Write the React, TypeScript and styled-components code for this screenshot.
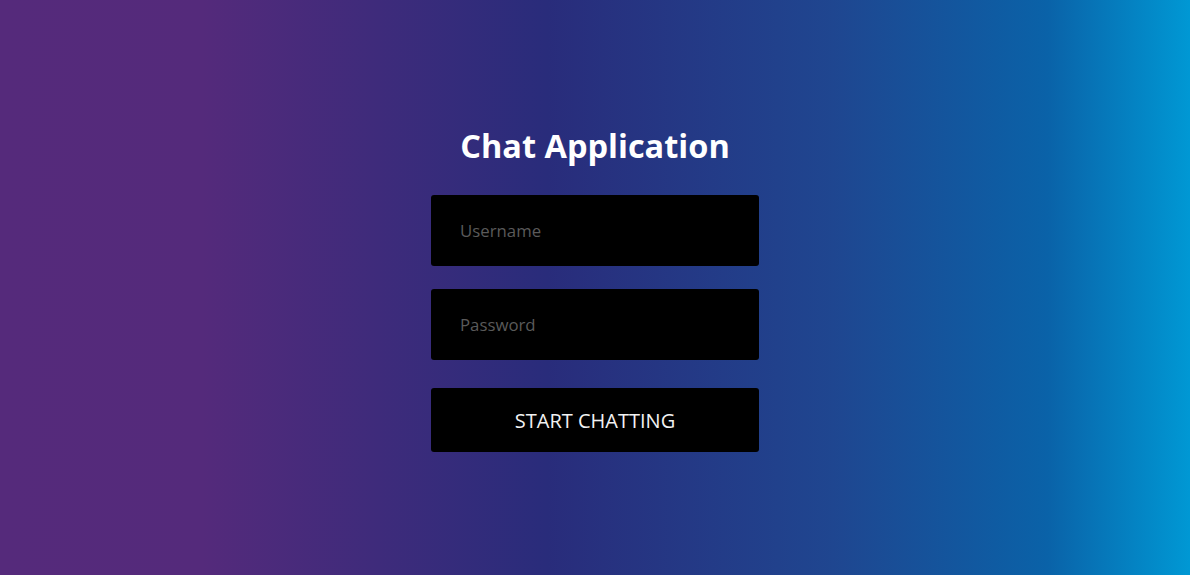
import React from 'react';
import styled, { createGlobalStyle } from 'styled-components';

const GlobalStyle = createGlobalStyle`
  html, body {
    margin: 0;
    padding: 0;
  }
  body {
    font-family: 'Open Sans', 'Noto Sans', sans-serif;
  }
`;

const Page = styled.div`
  width: 100%;
  height: 575px;
  display: flex;
  justify-content: center;
  background: linear-gradient(
    to right,
    #552a7b 0%,
    #542a7b 17%,
    #292c7b 46%,
    #1f4690 70%,
    #0a62a8 88%,
    #0098d4 100%
  );
`;

const Form = styled.form`
  width: 328px;
  padding-top: 123px;
  display: flex;
  flex-direction: column;
  align-items: stretch;
`;

const Title = styled.h1`
  margin: 0 0 26px;
  text-align: center;
  color: #fff;
  font-size: 32.5px;
  line-height: 46px;
  font-weight: 700;
`;

const Field = styled.input`
  height: 71px;
  box-sizing: border-box;
  margin-bottom: 23px;
  padding: 0 29px;
  border: none;
  border-radius: 3px;
  background: #000;
  color: #ddd;
  font-family: inherit;
  font-size: 16.8px;
  outline: none;

  &::placeholder {
    color: #5a5a5a;
  }
`;

const Submit = styled.button`
  margin-top: 5px;
  height: 64px;
  border: none;
  border-radius: 3px;
  background: #000;
  color: #f2f2f2;
  font-family: inherit;
  font-size: 20px;
  cursor: pointer;
`;

export default function App() {
  return (
    <>
      <GlobalStyle />
      <Page>
        <Form onSubmit={(e) => e.preventDefault()}>
          <Title>Chat Application</Title>
          <Field type="text" placeholder="Username" />
          <Field type="password" placeholder="Password" />
          <Submit type="submit">START CHATTING</Submit>
        </Form>
      </Page>
    </>
  );
}
